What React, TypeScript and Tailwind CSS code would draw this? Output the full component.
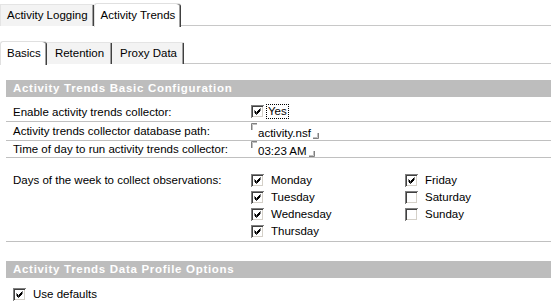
import React from "react";

function Check({ checked }: { checked: boolean }) {
  return (
    <svg width="13" height="13" viewBox="0 0 13 13" className="shrink-0">
      <rect x="0" y="0" width="13" height="13" fill="#808080" />
      <rect x="1" y="1" width="12" height="12" fill="#ffffff" />
      <rect x="1" y="1" width="11" height="11" fill="#404040" />
      <rect x="2" y="2" width="10" height="10" fill="#d4d0c8" />
      <rect x="2" y="2" width="9" height="9" fill="#ffffff" />
      {checked && (
        <path d="M3.5 5.5 L5.5 7.5 L9.5 3.5 M3.5 6.5 L5.5 8.5 L9.5 4.5 M3.5 7.5 L5.5 9.5 L9.5 5.5" stroke="#000" strokeWidth="1" fill="none" />
      )}
    </svg>
  );
}

function Field({ value }: { value: string }) {
  return (
    <span className="flex items-start">
      <svg width="6" height="7" viewBox="0 0 6 7" className="mt-[-1px] mr-[1px]">
        <path d="M0.5 7 V0.5 H6" stroke="#808080" fill="none" />
        <path d="M1.5 7 V1.5 H6" stroke="#c0c0c0" fill="none" />
      </svg>
      <span className="mt-[2px]">{value}</span>
      <svg width="6" height="6" viewBox="0 0 6 6" className="mt-[9px] ml-[2px]">
        <path d="M0 5.5 H5.5 V0" stroke="#808080" fill="none" />
        <path d="M0 4.5 H4.5 V0" stroke="#c0c0c0" fill="none" />
      </svg>
    </span>
  );
}

function Tab({ label, active, first, pad }: { label: string; active?: boolean; first?: boolean; pad?: string }) {
  return (
    <div
      className={
        (active
          ? "relative z-10 h-[24px] -mb-px pt-[4px] bg-white border-t border-l border-[#e0e0e0] rounded-tl-[3px] rounded-tr-[3px] shadow-[inset_-1px_0_0_#404040,inset_-2px_0_0_#a0a0a0]"
          : "h-[22px] pt-[3px] bg-[#f3f3f3] border-t border-[#e4e4e4] shadow-[inset_-1px_0_0_#404040,inset_-2px_0_0_#a0a0a0]" + (first ? " border-l" : "")) +
        " " +
        (pad ?? "px-[6px]")
      }
    >
      {label}
    </div>
  );
}

function Header({ title }: { title: string }) {
  return (
    <div className="h-[17px] bg-[#bdbdbd] pl-[7px] text-white font-bold tracking-[0.7px] leading-[17px]">
      {title}
    </div>
  );
}

function Row({ label, children, className }: { label: string; children: React.ReactNode; className?: string }) {
  return (
    <div className={"flex border-b border-[#c0c0c0] " + (className ?? "")}>
      <div className="w-[245px] pl-[7px]">{label}</div>
      <div>{children}</div>
    </div>
  );
}

const days: [string, boolean][] = [
  ["Monday", true],
  ["Tuesday", true],
  ["Wednesday", true],
  ["Thursday", true],
];
const days2: [string, boolean][] = [
  ["Friday", true],
  ["Saturday", false],
  ["Sunday", false],
];

export default function App() {
  return (
    <div
      className="w-[551px] h-[305px] overflow-hidden bg-white text-black text-[11.5px] leading-[14px]"
      style={{ fontFamily: '"Liberation Sans", Arial, sans-serif' }}
    >
      {/* top tabs */}
      <div className="flex items-end h-[26px] pt-[1px]">
        <Tab label="Activity Logging" first />
        <Tab label="Activity Trends" active />
        <div className="flex-1 border-b border-[#c8c8c8]" />
      </div>

      {/* sub tabs */}
      <div className="flex items-end h-[25px] mt-[13px]">
        <Tab label="Basics" active />
        <Tab label="Retention" pad="px-[8px]" />
        <Tab label="Proxy Data" pad="pl-[8px] pr-[7px]" />
        <div className="flex-1 border-b border-[#c8c8c8]" />
      </div>

      <div className="pl-[6px] pt-[16px]">
        <Header title="Activity Trends Basic Configuration" />
        <div className="pt-[5px]">
          <Row label="Enable activity trends collector:" className="h-[20px] pt-[3px]">
            <span className="flex items-center gap-[2px] mt-[-1px]">
              <Check checked />
              <span className="border border-dotted border-black px-[1px] leading-[13px]">Yes</span>
            </span>
          </Row>
          <Row label="Activity trends collector database path:" className="h-[19px] pt-[2px]">
            <Field value="activity.nsf" />
          </Row>
          <Row label="Time of day to run activity trends collector:" className="h-[17px] pt-[1px]">
            <Field value="03:23 AM" />
          </Row>
          <Row label="Days of the week to collect observations:" className="h-[84px] pt-[15px]">
            <div className="flex">
              <div className="w-[154px] flex flex-col gap-[3px]">
                {days.map(([d, c]) => (
                  <div key={d} className="flex items-center gap-[7px]">
                    <Check checked={c} />
                    <span>{d}</span>
                  </div>
                ))}
              </div>
              <div className="flex flex-col gap-[3px]">
                {days2.map(([d, c]) => (
                  <div key={d} className="flex items-center gap-[7px]">
                    <Check checked={c} />
                    <span>{d}</span>
                  </div>
                ))}
              </div>
            </div>
          </Row>
        </div>

        <div className="mt-[19px]">
          <Header title="Activity Trends Data Profile Options" />
        </div>
        <div className="flex items-center gap-[7px] pt-[9px] pl-[7px]">
          <Check checked />
          <span>Use defaults</span>
        </div>
      </div>
    </div>
  );
}
